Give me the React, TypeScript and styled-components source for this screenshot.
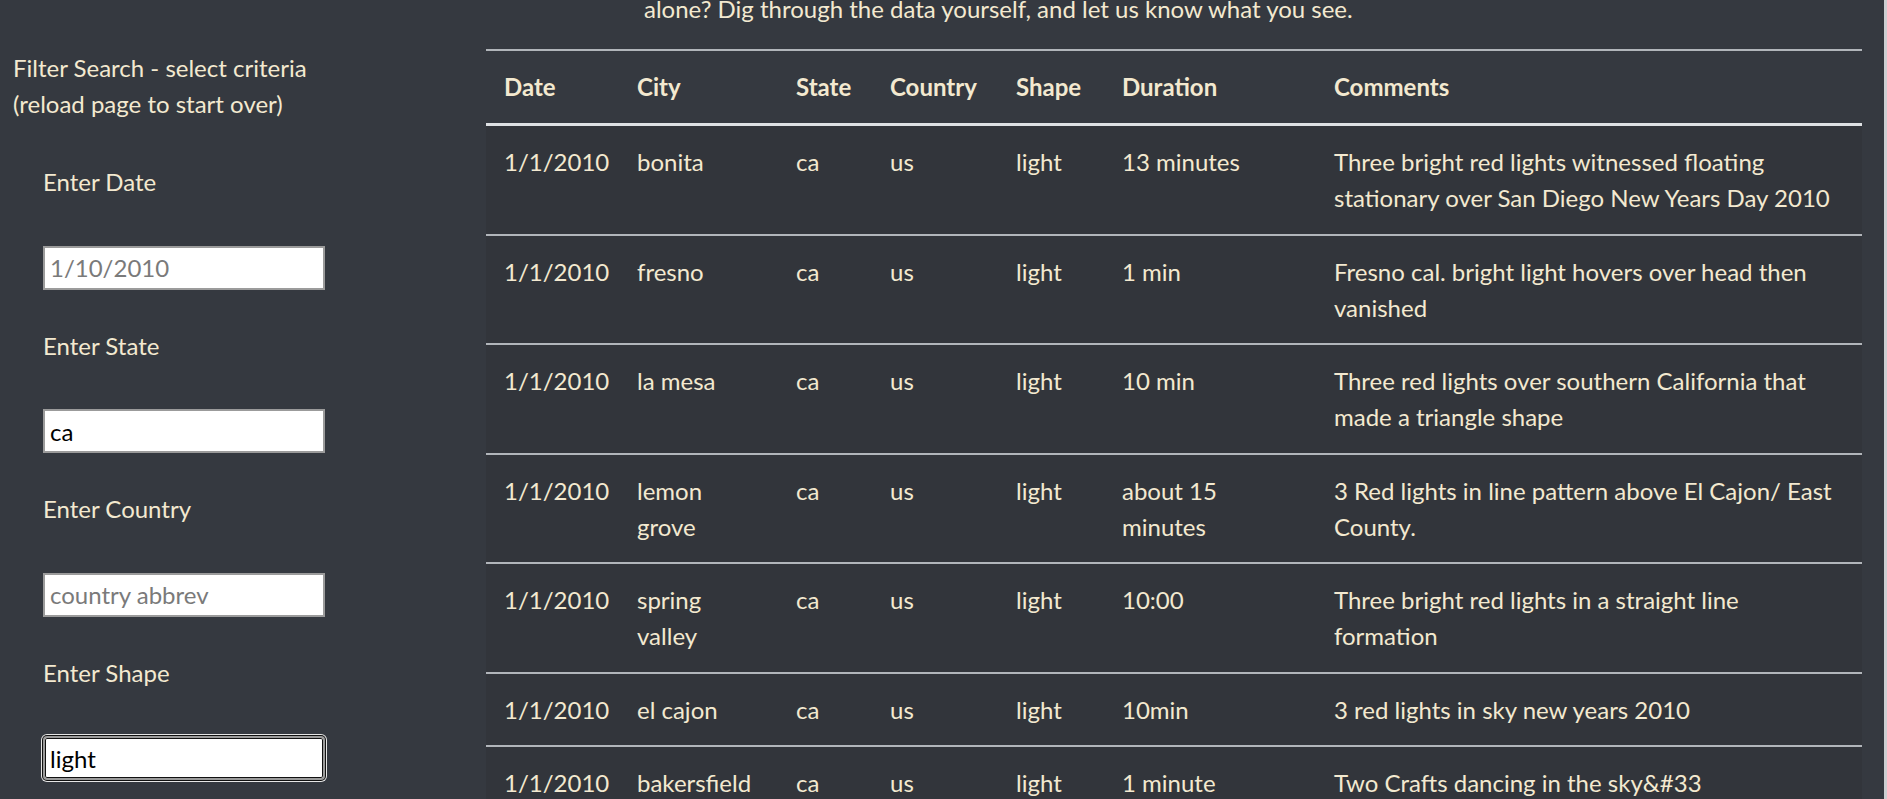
import React from "react";
import styled, { createGlobalStyle } from "styled-components";

const GlobalStyle = createGlobalStyle`
  html, body {
    margin: 0;
    padding: 0;
    background: #353940;
  }
  body {
    font-family: Lato, "Noto Sans", "Liberation Sans", sans-serif;
    font-size: 24px;
    line-height: 36px;
    color: #f3e9d0;
    overflow: hidden;
  }
  * { box-sizing: border-box; }
`;

const Page = styled.div`
  display: flex;
  align-items: flex-start;
  height: 799px;
  overflow: hidden;
  border-right: 3px solid #cdcfd2;
`;

const Sidebar = styled.aside`
  flex: none;
  width: 486px;
  padding: 50px 0 0 13px;
`;

const SideTitle = styled.div`
  font-size: 24px;
  line-height: 36px;
`;

const FilterList = styled.ul`
  list-style: none;
  margin: 42px 0 0;
  padding: 0 0 0 30px;
  display: flex;
  flex-direction: column;
  gap: 38px;
`;

const FilterItem = styled.li`
  display: flex;
  flex-direction: column;
  align-items: flex-start;
`;

const FilterLabel = styled.label`
  display: block;
  line-height: 36px;
  margin-bottom: 45.5px;
`;

const FilterInput = styled.input<{ $focused?: boolean }>`
  width: 282px;
  height: 44px;
  margin: 0;
  padding: 1px 5px;
  font-family: inherit;
  font-size: 24px;
  line-height: 36px;
  color: #000;
  background: #fff;
  border: 2px solid #9b9b9b;
  border-radius: ${(p) => (p.$focused ? "4px" : "0")};
  outline: none;
  box-shadow: ${(p) =>
    p.$focused ? "0 0 0 1px #111, inset 0 0 0 1px #111, 0 0 0 2px #e6e6e6" : "none"};
  &::placeholder {
    color: #7a7a7a;
  }
`;

const Main = styled.main`
  flex: 1;
  min-width: 0;
  padding-right: 22px;
`;

const Intro = styled.p`
  margin: -9px 0 22px;
  padding-left: 158px;
  line-height: 36px;
  white-space: nowrap;
`;

const Table = styled.table`
  width: 100%;
  border-collapse: collapse;
  table-layout: fixed;
`;

const HeadCell = styled.th`
  text-align: left;
  font-weight: 700;
  padding: 18px;
  line-height: 36px;
  vertical-align: bottom;
  border-top: 2px solid #b1b5ba;
  border-bottom: 3px solid #dee1e4;
`;

const Body = styled.tbody`
  background: #32353b;
`;

const Cell = styled.td`
  padding: 18px 18px 17.5px;
  line-height: 36px;
  vertical-align: top;
  border-top: 2px solid #b1b5ba;
`;

const columns = [
  { key: "date", label: "Date", width: 133 },
  { key: "city", label: "City", width: 159 },
  { key: "state", label: "State", width: 94 },
  { key: "country", label: "Country", width: 126 },
  { key: "shape", label: "Shape", width: 106 },
  { key: "duration", label: "Duration", width: 212 },
  { key: "comments", label: "Comments", width: 546 },
] as const;

type Row = Record<(typeof columns)[number]["key"], string>;

const rows: Row[] = [
  {
    date: "1/1/2010",
    city: "bonita",
    state: "ca",
    country: "us",
    shape: "light",
    duration: "13 minutes",
    comments:
      "Three bright red lights witnessed floating stationary over San Diego New Years Day 2010",
  },
  {
    date: "1/1/2010",
    city: "fresno",
    state: "ca",
    country: "us",
    shape: "light",
    duration: "1 min",
    comments: "Fresno cal. bright light hovers over head then vanished",
  },
  {
    date: "1/1/2010",
    city: "la mesa",
    state: "ca",
    country: "us",
    shape: "light",
    duration: "10 min",
    comments: "Three red lights over southern California that made a triangle shape",
  },
  {
    date: "1/1/2010",
    city: "lemon grove",
    state: "ca",
    country: "us",
    shape: "light",
    duration: "about 15 minutes",
    comments: "3 Red lights in line pattern above El Cajon/ East County.",
  },
  {
    date: "1/1/2010",
    city: "spring valley",
    state: "ca",
    country: "us",
    shape: "light",
    duration: "10:00",
    comments: "Three bright red lights in a straight line formation",
  },
  {
    date: "1/1/2010",
    city: "el cajon",
    state: "ca",
    country: "us",
    shape: "light",
    duration: "10min",
    comments: "3 red lights in sky new years 2010",
  },
  {
    date: "1/1/2010",
    city: "bakersfield",
    state: "ca",
    country: "us",
    shape: "light",
    duration: "1 minute",
    comments: "Two Crafts dancing in the sky&#33",
  },
];

const filters = [
  { id: "datetime", label: "Enter Date", placeholder: "1/10/2010", value: "" },
  { id: "state", label: "Enter State", placeholder: "state abbrev", value: "ca" },
  { id: "country", label: "Enter Country", placeholder: "country abbrev", value: "" },
  { id: "shape", label: "Enter Shape", placeholder: "shape", value: "light", focused: true },
];

export default function App() {
  return (
    <>
      <GlobalStyle />
      <Page>
        <Sidebar>
          <SideTitle>
            Filter Search - select criteria
            <br />
            (reload page to start over)
          </SideTitle>
          <FilterList>
            {filters.map((f) => (
              <FilterItem key={f.id}>
                <FilterLabel htmlFor={f.id}>{f.label}</FilterLabel>
                <FilterInput
                  id={f.id}
                  type="text"
                  placeholder={f.placeholder}
                  defaultValue={f.value}
                  $focused={f.focused}
                />
              </FilterItem>
            ))}
          </FilterList>
        </Sidebar>
        <Main>
          <Intro>alone? Dig through the data yourself, and let us know what you see.</Intro>
          <Table>
            <colgroup>
              {columns.map((c) => (
                <col key={c.key} style={{ width: c.width }} />
              ))}
            </colgroup>
            <thead>
              <tr>
                {columns.map((c) => (
                  <HeadCell key={c.key}>{c.label}</HeadCell>
                ))}
              </tr>
            </thead>
            <Body>
              {rows.map((r, i) => (
                <tr key={i}>
                  {columns.map((c) => (
                    <Cell key={c.key}>{r[c.key]}</Cell>
                  ))}
                </tr>
              ))}
            </Body>
          </Table>
        </Main>
      </Page>
    </>
  );
}
